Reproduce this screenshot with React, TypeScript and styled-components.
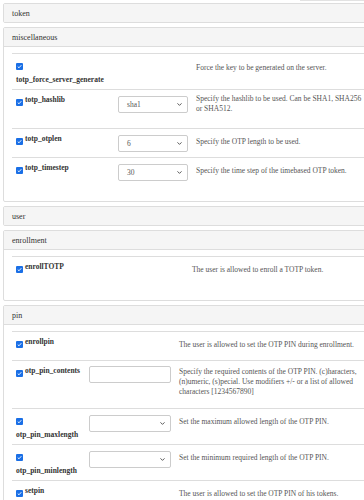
import React from 'react';
import styled, { createGlobalStyle } from 'styled-components';
import { ChevronDown } from 'lucide-react';

const GlobalStyle = createGlobalStyle`
  html, body {
    margin: 0;
    background: #fff;
    overflow: hidden;
  }
  body {
    font-family: 'Liberation Serif', 'Times New Roman', serif;
    color: #333;
  }
  * {
    box-sizing: border-box;
  }
`;

const Page = styled.div`
  width: 420px;
  display: flex;
  flex-direction: column;
  gap: 4px;
  padding: 0 0 0 3px;
`;

const TopEdge = styled.div`
  height: 3px;
  margin-left: 300px;
  border-top: 1px solid #e2e2e2;
`;

const Panel = styled.section`
  border: 1px solid #ddd;
  border-radius: 2px;
  background: #fff;
`;

const PanelHeading = styled.div<{ $open?: boolean }>`
  height: ${(p) => (p.$open ? 19 : 18)}px;
  display: flex;
  align-items: center;
  padding-left: 8px;
  background: #f5f5f5;
  font-size: 8px;
  color: #333;
  border-bottom: ${(p) => (p.$open ? '1px solid #ddd' : 'none')};
`;

const PanelBody = styled.div`
  padding: 6px 0 15px 8px;
`;

const Table = styled.div<{ $cols: string }>`
  display: flex;
  flex-direction: column;
  --cols: ${(p) => p.$cols};
`;

const Row = styled.div`
  display: grid;
  grid-template-columns: var(--cols);
  border-top: 1px solid #ddd;
  align-items: start;
`;

const LabelCell = styled.div<{ $stack?: boolean }>`
  display: flex;
  flex-direction: ${(p) => (p.$stack ? 'column' : 'row')};
  align-items: flex-start;
  padding: 0 4px 5.5px;
`;

const Check = styled.span`
  width: 7px;
  height: 7px;
  margin: 9px 2px 0 0;
  border-radius: 1px;
  background: #1a6fe6;
  display: flex;
  align-items: center;
  justify-content: center;
  flex-shrink: 0;
`;

const LabelText = styled.span`
  padding-top: 4.5px;
  font-size: 7.5px;
  line-height: 9px;
  font-weight: bold;
  white-space: nowrap;
  color: #333;
`;

const ValueCell = styled.div`
  padding: 5.5px 4px 5.5px;
`;

const SelectBox = styled.div`
  height: 17px;
  width: 100%;
  border: 1px solid #ccc;
  border-radius: 2px;
  background: #fff;
  display: flex;
  align-items: center;
  justify-content: space-between;
  padding: 0 4px 0 8px;
  font-size: 7.5px;
  color: #555;
`;

const TextBox = styled.div`
  height: 17px;
  width: 100%;
  margin-top: -1px;
  border: 1px solid #ccc;
  border-radius: 2px;
  background: #fff;
`;

const Desc = styled.p<{ $top?: number; $bottom?: number }>`
  margin: 0;
  padding: ${(p) => p.$top ?? 8}px 4px ${(p) => p.$bottom ?? 10}px;
  font-size: 7.5px;
  line-height: 10px;
  color: #555;
`;

const Checkbox = () => (
  <Check>
    <svg width="5" height="5" viewBox="0 0 10 10">
      <path d="M1.5 5.2 L4 7.6 L8.6 2.4" fill="none" stroke="#fff" strokeWidth="1.8" />
    </svg>
  </Check>
);

const Select = ({ value }: { value?: string }) => (
  <SelectBox>
    <span>{value}</span>
    <ChevronDown size={7} strokeWidth={3} color="#444" />
  </SelectBox>
);

type Item = {
  name: string;
  desc: string;
  stack?: boolean;
  select?: string;
  input?: boolean;
  descTop?: number;
  descBottom?: number;
};

const misc: Item[] = [
  { name: 'totp_force_server_generate', stack: true, desc: 'Force the key to be generated on the server.', descTop: 9 },
  {
    name: 'totp_hashlib',
    select: 'sha1',
    desc: 'Specify the hashlib to be used. Can be SHA1, SHA256 or SHA512.',
    descTop: 4,
    descBottom: 14,
  },
  { name: 'totp_otplen', select: '6', desc: 'Specify the OTP length to be used.' },
  { name: 'totp_timestep', select: '30', desc: 'Specify the time step of the timebased OTP token.' },
];

const enrollment: Item[] = [
  { name: 'enrollTOTP', desc: 'The user is allowed to enroll a TOTP token.' },
];

const pin: Item[] = [
  { name: 'enrollpin', desc: 'The user is allowed to set the OTP PIN during enrollment.' },
  {
    name: 'otp_pin_contents',
    input: true,
    desc: 'Specify the required contents of the OTP PIN. (c)haracters, (n)umeric, (s)pecial. Use modifiers +/- or a list of allowed characters [1234567890]',
    descTop: 6,
    descBottom: 11,
  },
  { name: 'otp_pin_maxlength', stack: true, select: '', desc: 'Set the maximum allowed length of the OTP PIN.' },
  { name: 'otp_pin_minlength', stack: true, select: '', desc: 'Set the minimum required length of the OTP PIN.' },
  { name: 'setpin', desc: 'The user is allowed to set the OTP PIN of his tokens.' },
];

const PolicyTable = ({ cols, items }: { cols: string; items: Item[] }) => (
  <Table $cols={cols}>
    {items.map((it) => (
      <Row key={it.name}>
        <LabelCell $stack={it.stack}>
          <Checkbox />
          <LabelText>{it.name}</LabelText>
        </LabelCell>
        <ValueCell>
          {it.select !== undefined && <Select value={it.select} />}
          {it.input && <TextBox />}
        </ValueCell>
        <Desc $top={it.descTop} $bottom={it.descBottom}>
          {it.desc}
        </Desc>
      </Row>
    ))}
  </Table>
);

const App: React.FC = () => (
  <>
    <GlobalStyle />
    <TopEdge />
    <Page>
      <Panel>
        <PanelHeading>token</PanelHeading>
      </Panel>
      <Panel>
        <PanelHeading $open>miscellaneous</PanelHeading>
        <PanelBody>
          <PolicyTable cols="102px 78px 178px" items={misc} />
        </PanelBody>
      </Panel>
      <Panel>
        <PanelHeading>user</PanelHeading>
      </Panel>
      <Panel>
        <PanelHeading $open>enrollment</PanelHeading>
        <PanelBody>
          <PolicyTable cols="98px 78px 182px" items={enrollment} />
        </PanelBody>
      </Panel>
      <Panel>
        <PanelHeading $open>pin</PanelHeading>
        <PanelBody>
          <PolicyTable cols="73px 90px 189px" items={pin} />
        </PanelBody>
      </Panel>
    </Page>
  </>
);

export default App;
